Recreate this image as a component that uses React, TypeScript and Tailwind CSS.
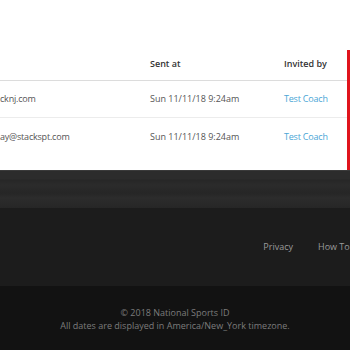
import React from 'react';

type Invite = { email: string; sentAt: string; invitedBy: string };

const invites: Invite[] = [
  { email: 'cknj.com', sentAt: 'Sun 11/11/18 9:24am', invitedBy: 'Test Coach' },
  { email: 'ay@stackspt.com', sentAt: 'Sun 11/11/18 9:24am', invitedBy: 'Test Coach' },
];

export default function App() {
  return (
    <div className="w-[350px] h-[350px] overflow-hidden bg-white text-[9px] font-['Open_Sans',_'Liberation_Sans',_sans-serif]">
      {/* invitations table */}
      <div className="h-[170px] flex bg-white">
        <div className="flex-1 pt-[47px]">
          <div className="flex h-[34px] items-center border-b border-[#dcdcdc] font-semibold text-[#333]">
            <div className="w-[150px]" />
            <div className="w-[134px]">Sent at</div>
            <div className="flex-1">Invited by</div>
          </div>
          {invites.map((inv, i) => (
            <div
              key={i}
              className={`flex h-[37px] items-center text-[#555] ${i === 0 ? 'border-b border-[#ececec]' : ''}`}
            >
              <div className="w-[150px] tracking-[-0.2px]">{inv.email}</div>
              <div className="w-[134px]">{inv.sentAt}</div>
              <div className="flex-1 text-[#4ba6d6] tracking-[-0.2px]">{inv.invitedBy}</div>
            </div>
          ))}
        </div>
        <div className="w-[3px] mt-[50px] bg-[#e0141c]" />
      </div>

      {/* dark wood strip */}
      <div className="h-[38px] border-t border-[#3a3a3a] bg-[#282828] bg-[linear-gradient(180deg,rgba(255,255,255,0.02)_0px,rgba(255,255,255,0.02)_8px,rgba(0,0,0,0.04)_9px,rgba(255,255,255,0.015)_14px,rgba(0,0,0,0.05)_22px,rgba(255,255,255,0.02)_27px,rgba(0,0,0,0.06)_38px)]" />

      {/* footer links */}
      <div className="h-[78px] bg-[#1c1c1c] flex items-center justify-end gap-[25px] text-[#9a9a9a]">
        <span>Privacy</span>
        <span className="w-[32px] whitespace-nowrap">How To's</span>
      </div>

      {/* copyright */}
      <div className="h-[64px] bg-[#121212] flex flex-col items-center pt-[20px] leading-[13px] text-[#7c7c7c]">
        <span>© 2018 National Sports ID</span>
        <span>All dates are displayed in America/New_York timezone.</span>
      </div>
    </div>
  );
}
